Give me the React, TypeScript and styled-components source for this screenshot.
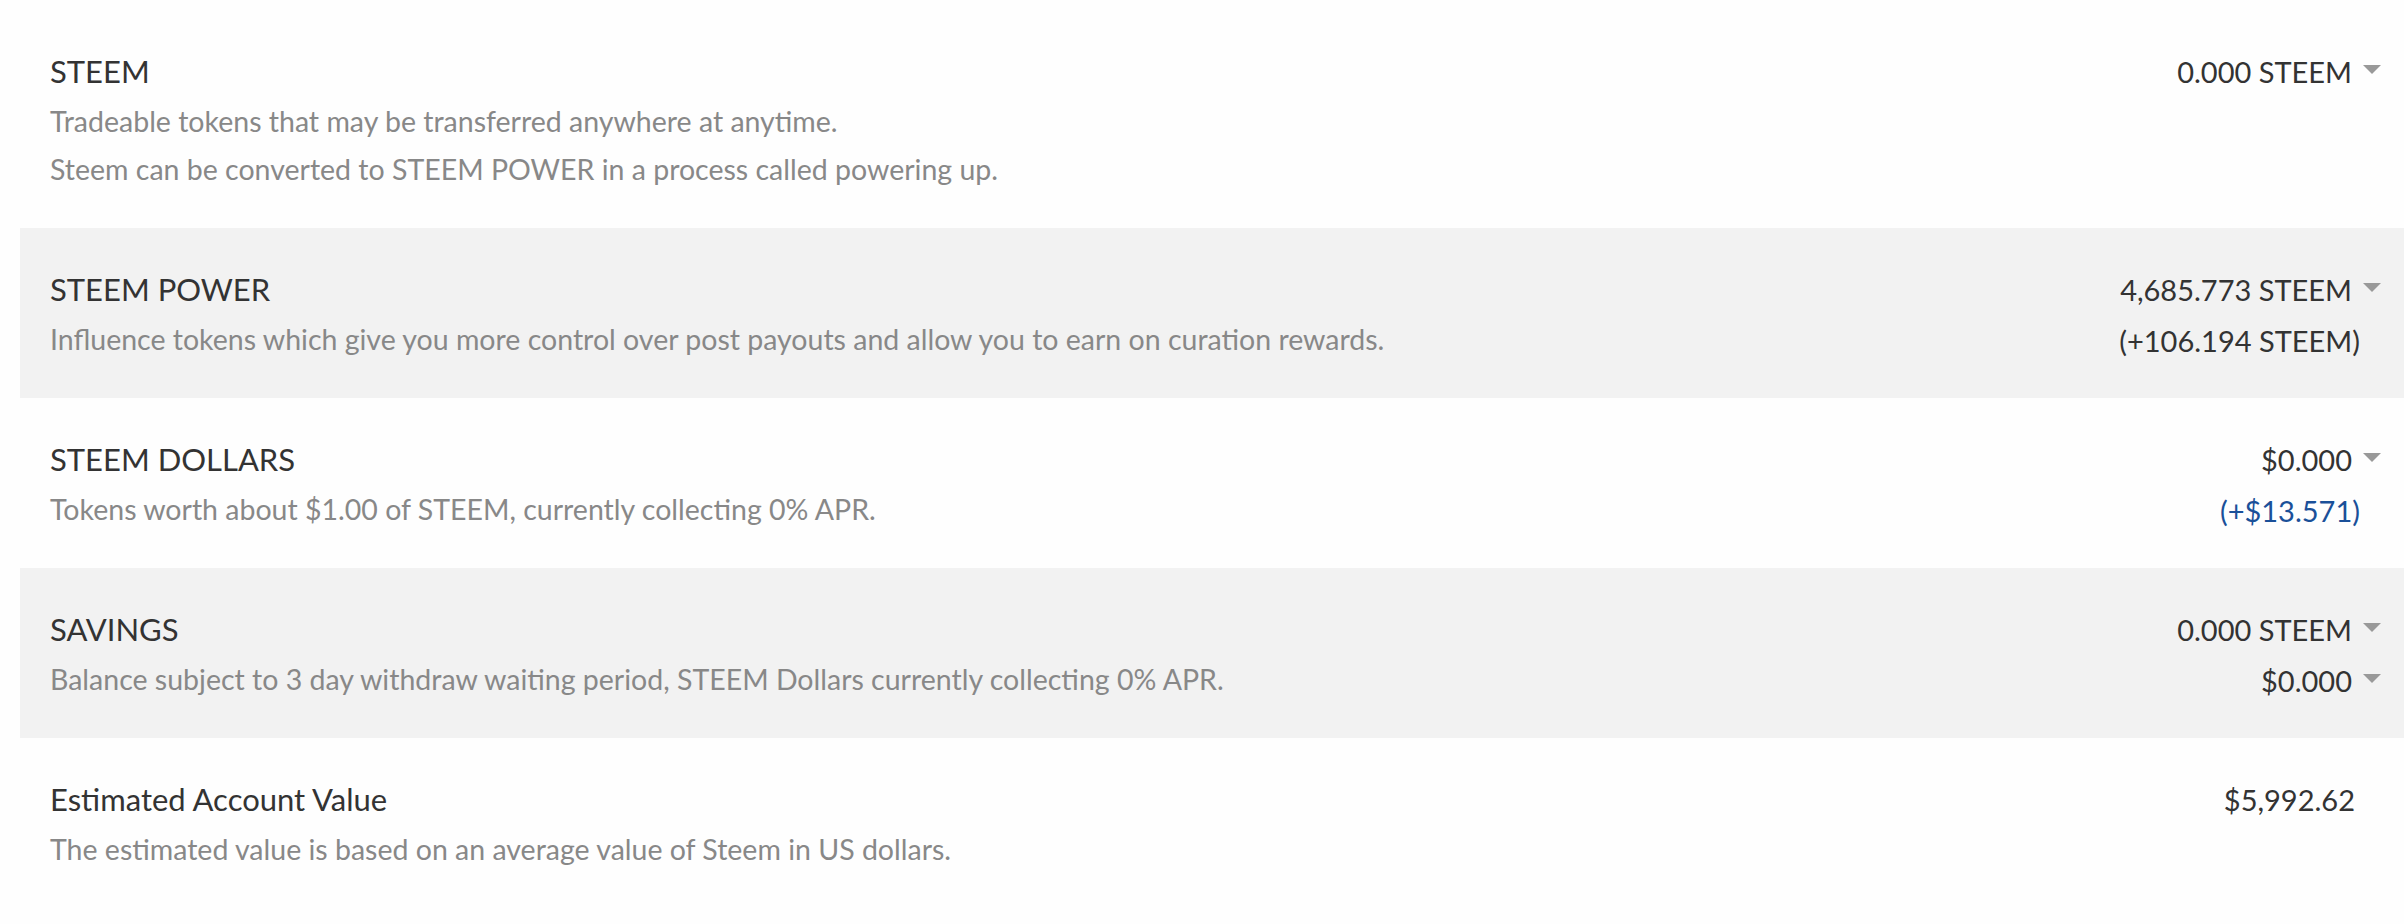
import styled, { createGlobalStyle } from 'styled-components';

const GlobalStyle = createGlobalStyle`
  html, body {
    margin: 0;
    padding: 0;
    background: #fefefe;
  }
  body {
    font-family: Lato, "Liberation Sans", sans-serif;
    -webkit-font-smoothing: antialiased;
  }
`;

type ValueLine = {
  text: string;
  caret?: boolean;
  link?: boolean;
  inset?: number;
};

type BalanceRowData = {
  title: string;
  lines: string[];
  values: ValueLine[];
};

const rows: BalanceRowData[] = [
  {
    title: 'STEEM',
    lines: [
      'Tradeable tokens that may be transferred anywhere at anytime.',
      'Steem can be converted to STEEM POWER in a process called powering up.',
    ],
    values: [{ text: '0.000 STEEM', caret: true }],
  },
  {
    title: 'STEEM POWER',
    lines: [
      'Influence tokens which give you more control over post payouts and allow you to earn on curation rewards.',
    ],
    values: [
      { text: '4,685.773 STEEM', caret: true },
      { text: '(+106.194 STEEM)', inset: 21 },
    ],
  },
  {
    title: 'STEEM DOLLARS',
    lines: ['Tokens worth about $1.00 of STEEM, currently collecting 0% APR.'],
    values: [
      { text: '$0.000', caret: true },
      { text: '(+$13.571)', link: true, inset: 21 },
    ],
  },
  {
    title: 'SAVINGS',
    lines: [
      'Balance subject to 3 day withdraw waiting period, STEEM Dollars currently collecting 0% APR.',
    ],
    values: [
      { text: '0.000 STEEM', caret: true },
      { text: '$0.000', caret: true },
    ],
  },
  {
    title: 'Estimated Account Value',
    lines: ['The estimated value is based on an average value of Steem in US dollars.'],
    values: [{ text: '$5,992.62', inset: 26 }],
  },
];

const App = () => {
  return (
    <>
      <GlobalStyle />
      <Wallet>
        {rows.map((row, i) => (
          <BalanceRow key={row.title} $shaded={i % 2 === 1}>
            <Info>
              <Title>{row.title}</Title>
              {row.lines.map((line) => (
                <Description key={line}>{line}</Description>
              ))}
            </Info>
            <Values>
              {row.values.map((v) => (
                <Amount key={v.text} $link={v.link} $inset={v.inset ?? 0}>
                  {v.text}
                  {v.caret && <Caret />}
                </Amount>
              ))}
            </Values>
          </BalanceRow>
        ))}
      </Wallet>
    </>
  );
};

const Wallet = styled.div`
  padding: 10px 0 0 20px;
`;

const BalanceRow = styled.div<{ $shaded: boolean }>`
  display: flex;
  justify-content: space-between;
  align-items: flex-start;
  padding: 36px 23px 35px 30px;
  background-color: ${({ $shaded }) => ($shaded ? '#f2f2f2' : 'transparent')};
`;

const Info = styled.div`
  display: flex;
  flex-direction: column;
`;

const Title = styled.div`
  font-size: 31px;
  line-height: 51px;
  color: #333;
`;

const Description = styled.div`
  font-size: 28.5px;
  line-height: 48px;
  color: #888;
`;

const Values = styled.div`
  display: flex;
  flex-direction: column;
  align-items: flex-end;
  margin-bottom: -3px;
`;

const Amount = styled.div<{ $link?: boolean; $inset: number }>`
  display: flex;
  align-items: center;
  font-size: 29px;
  line-height: 51px;
  color: ${({ $link }) => ($link ? '#1a5099' : '#333')};
  margin-right: ${({ $inset }) => $inset}px;
`;

const Caret = styled.span`
  display: inline-block;
  width: 0;
  height: 0;
  margin-left: 11px;
  margin-top: -4px;
  border-left: 9px solid transparent;
  border-right: 9px solid transparent;
  border-top: 9px solid #999;
`;

export default App;
